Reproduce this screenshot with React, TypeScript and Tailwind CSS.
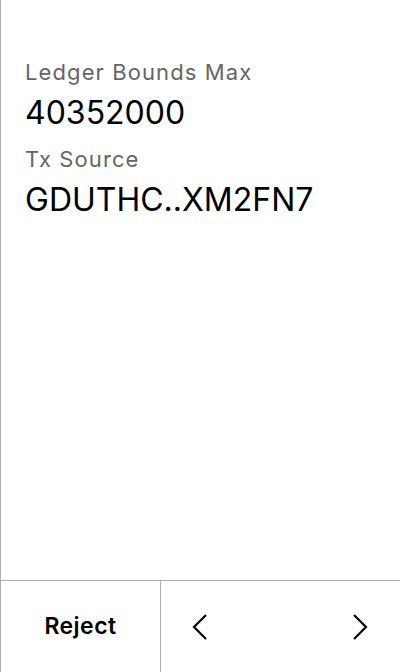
import React from 'react';

const Field: React.FC<{ label: string; value: string }> = ({ label, value }) => (
  <div className="flex flex-col">
    <span className="text-[22px] leading-[28px] tracking-[0.05em] text-[#666666]">{label}</span>
    <span className="mt-[9px] text-[32px] leading-[36px] text-black">{value}</span>
  </div>
);

const Chevron: React.FC<{ dir: 'left' | 'right' }> = ({ dir }) => (
  <svg width="16" height="26" viewBox="0 0 16 26" fill="none">
    <path
      d={dir === 'left' ? 'M14 1L2 13L14 25' : 'M2 1L14 13L2 25'}
      stroke="black"
      strokeWidth="2.2"
    />
  </svg>
);

export default function App() {
  return (
    <div
      className="flex h-[672px] w-[400px] flex-col border-l border-[#b0b0b0] bg-white"
      style={{ fontFamily: 'Inter, "Noto Sans", sans-serif' }}
    >
      <div className="flex flex-1 flex-col gap-[14px] px-6 pt-[58px]">
        <Field label="Ledger Bounds Max" value="40352000" />
        <Field label="Tx Source" value="GDUTHC..XM2FN7" />
      </div>
      <div className="flex h-[92px] border-t border-[#b0b0b0]">
        <button className="flex w-[160px] items-center justify-center border-r border-[#b0b0b0] text-[23px] font-semibold tracking-[0.02em] text-black">
          Reject
        </button>
        <div className="flex flex-1 items-center justify-between pl-[31px] pr-[32px]">
          <Chevron dir="left" />
          <Chevron dir="right" />
        </div>
      </div>
    </div>
  );
}
